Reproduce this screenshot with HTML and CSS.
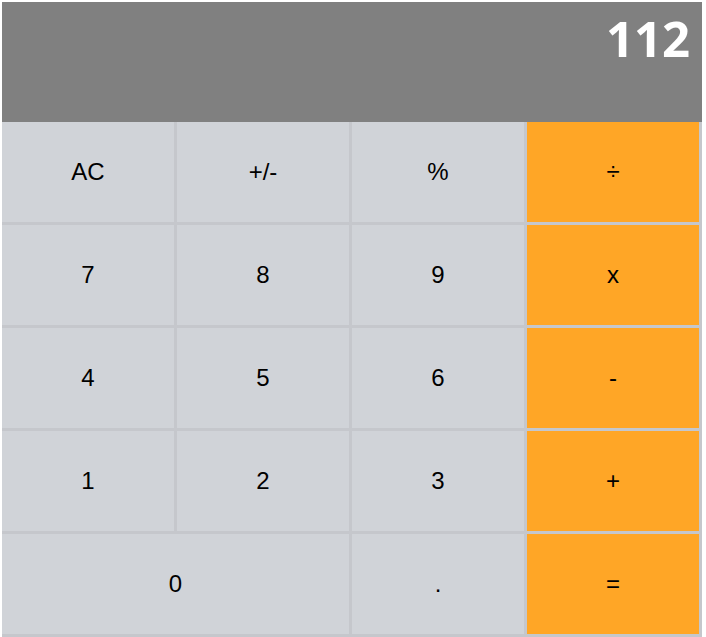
FILE: index.html
```html
<!DOCTYPE html>
<html>
<head>
<meta charset="utf-8">
<link rel="stylesheet" href="styles.css">
</head>
<body>
<div class="calc">
  <div class="display">112</div>
  <div class="keys">
    <div class="key">AC</div>
    <div class="key">+/-</div>
    <div class="key">%</div>
    <div class="key op">÷</div>
    <div class="key">7</div>
    <div class="key">8</div>
    <div class="key">9</div>
    <div class="key op">x</div>
    <div class="key">4</div>
    <div class="key">5</div>
    <div class="key">6</div>
    <div class="key op">-</div>
    <div class="key">1</div>
    <div class="key">2</div>
    <div class="key">3</div>
    <div class="key op">+</div>
    <div class="key zero">0</div>
    <div class="key">.</div>
    <div class="key op">=</div>
  </div>
</div>
</body>
</html>
```
FILE: styles.css
```css
html, body {
  margin: 0;
  padding: 0;
  background: #ffffff;
}
.calc {
  padding: 2px 0 0 2px;
  width: 700px;
  font-family: "Liberation Sans", Arial, sans-serif;
}
.display {
  height: 120px;
  background: #808080;
  color: #ffffff;
  font-family: "Open Sans", sans-serif;
  font-weight: 700;
  font-size: 49px;
  line-height: 1;
  text-align: right;
  padding: 12px 12px 0 0;
  box-sizing: border-box;
}
.keys {
  display: grid;
  grid-template-columns: repeat(4, 172px);
  grid-auto-rows: 100px;
  gap: 3px;
  padding: 0 3px 3px 0;
  background: #c5c7cc;
}
.key {
  background: #d0d3d8;
  display: flex;
  align-items: center;
  justify-content: center;
  font-size: 24px;
  color: #000000;
}
.key.op {
  background: #ffa626;
}
.key.zero {
  grid-column: span 2;
}
```
